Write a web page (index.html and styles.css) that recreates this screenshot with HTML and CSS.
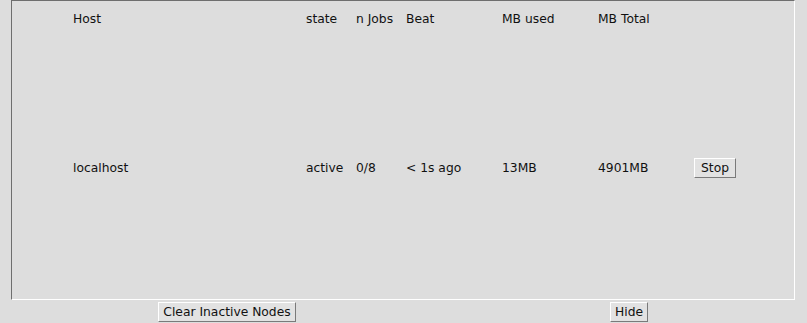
FILE: index.html
```html
<!DOCTYPE html>
<html>
<head>
<meta charset="utf-8">
<link rel="stylesheet" href="styles.css">
</head>
<body>
<div class="app">
  <div class="panel">
    <div class="table">
      <div class="row head">
        <div class="c host">Host</div>
        <div class="c state">state</div>
        <div class="c jobs">n Jobs</div>
        <div class="c beat">Beat</div>
        <div class="c used">MB used</div>
        <div class="c total">MB Total</div>
        <div class="c act"></div>
      </div>
      <div class="row data">
        <div class="c host">localhost</div>
        <div class="c state">active</div>
        <div class="c jobs">0/8</div>
        <div class="c beat">&lt; 1s ago</div>
        <div class="c used">13MB</div>
        <div class="c total">4901MB</div>
        <div class="c act"><button class="btn stop">Stop</button></div>
      </div>
    </div>
  </div>
  <div class="bar">
    <button class="btn clear">Clear Inactive Nodes</button>
    <button class="btn hide">Hide</button>
  </div>
</div>
</body>
</html>
```

FILE: styles.css
```css
html, body {
  margin: 0;
  padding: 0;
  background: #dddddd;
}
body {
  width: 807px;
  height: 323px;
  overflow: hidden;
  font-family: "DejaVu Sans", sans-serif;
  font-size: 12.3px;
  color: #111;
}
.app {
  display: flex;
  flex-direction: column;
  height: 323px;
}
.panel {
  margin-left: 11px;
  width: 782px;
  height: 298px;
  border-top: 1px solid #6e6e6e;
  border-left: 1px solid #6e6e6e;
  border-right: 1px solid #ffffff;
  border-bottom: 1px solid #ffffff;
  display: flex;
}
.table {
  flex: 1;
  display: flex;
  flex-direction: column;
  padding-left: 61px;
}
.row {
  display: flex;
  align-items: center;
}
.head {
  height: 35px;
}
.data {
  flex: 1;
}
.c { white-space: nowrap; }
.host { width: 233px; }
.state { width: 50px; }
.jobs { width: 50px; }
.beat { width: 96px; }
.used { width: 96px; }
.total { width: 96px; }
.btn {
  font-family: "DejaVu Sans", sans-serif;
  font-size: 12.3px;
  color: #111;
  background: #e2e2e2;
  border-top: 1px solid #ffffff;
  border-left: 1px solid #ffffff;
  border-right: 1px solid #7a7a7a;
  border-bottom: 1px solid #7a7a7a;
  padding: 0;
  height: 20px;
  line-height: 18px;
  margin: 0;
  box-sizing: border-box;
  white-space: nowrap;
  text-align: center;
}
.stop {
  width: 42px;
  margin-top: 1px;
}
.bar {
  display: flex;
  align-items: flex-start;
  padding-top: 2px;
}
.clear {
  margin-left: 158px;
  width: 138px;
}
.hide {
  margin-left: 314px;
  width: 38px;
}
```
